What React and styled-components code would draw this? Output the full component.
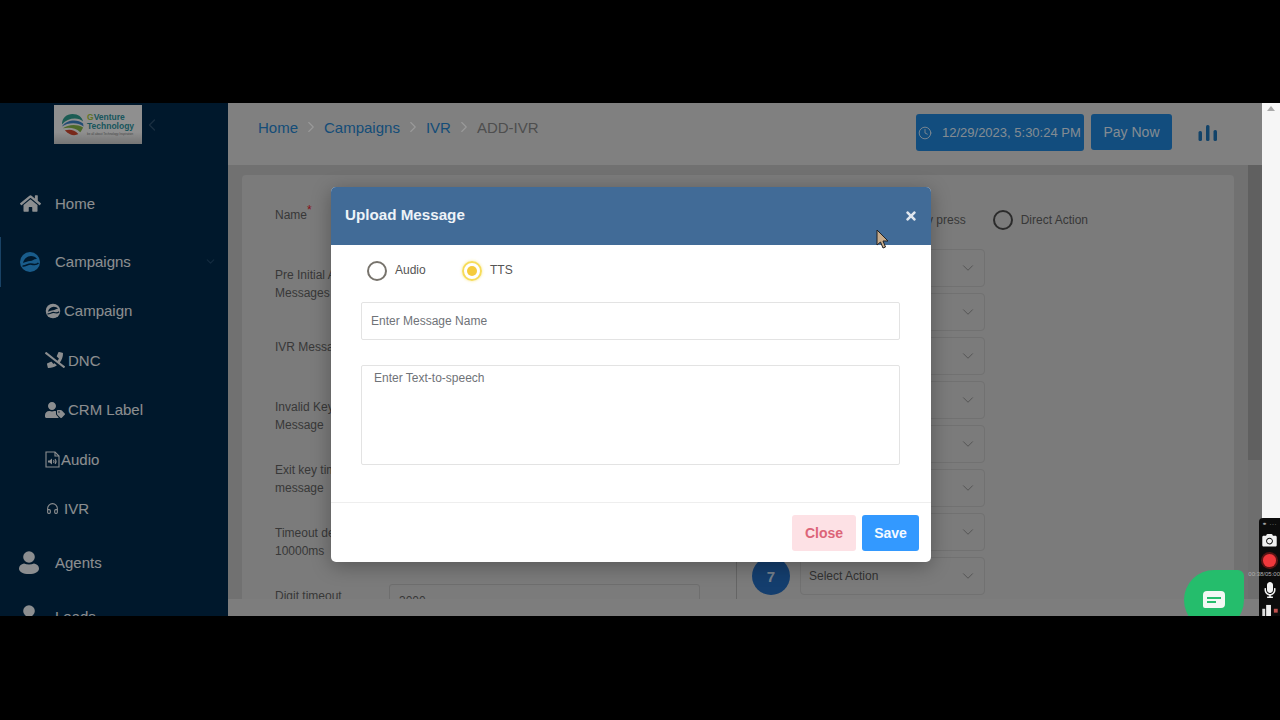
import React from "react";
import styled, { createGlobalStyle } from "styled-components";
import { ChevronDown, ChevronLeft, ChevronRight, Clock, Headphones } from "lucide-react";
import { FaCamera, FaHome, FaMicrophone, FaPhoneSlash, FaTimes, FaUserTag } from "react-icons/fa";

const GlobalStyle = createGlobalStyle`
  html, body { margin: 0; background: #000; overflow: hidden; }
  * { box-sizing: border-box; }
  body { font-family: "Liberation Sans", Arial, sans-serif; }
`;

const Screen = styled.div`
  width: 1280px;
  height: 720px;
  padding: 103px 0 104px;
  background: #000;
`;

const Viewport = styled.div`
  position: relative;
  display: flex;
  height: 513px;
  overflow: hidden;
  background: #f6f6f6;
`;

const AppArea = styled.div`
  position: relative;
  display: flex;
  width: 1262px;
  height: 100%;
`;

const PageScrollbar = styled.div`
  flex: 1;
  display: flex;
  justify-content: center;
  padding-top: 3px;
  &::before {
    content: "";
    border: 4px solid transparent;
    border-top: 0;
    border-bottom: 5px solid #aaa;
    height: 0;
  }
`;

const Sidebar = styled.aside`
  width: 228px;
  flex-shrink: 0;
  background: #00294a;
  overflow: hidden;
`;

const LogoRow = styled.div`
  display: flex;
  align-items: center;
  height: 76px;
  padding: 2px 0 35px 54px;
  color: #2c4e6c;
`;

const LogoBox = styled.div`
  display: flex;
  align-items: center;
  gap: 2px;
  width: 88px;
  height: 39px;
  padding: 0 4px 0 6px;
  background: linear-gradient(#eee 70%, #c4c4c4);
`;

const LogoText = styled.div`
  display: flex;
  flex-direction: column;
  color: #2b8f9a;
  font-size: 8.5px;
  font-weight: bold;
  line-height: 9px;
  white-space: nowrap;
  b { color: #9fc23c; }
  small {
    color: #777;
    font-size: 3px;
    font-weight: normal;
    line-height: 6px;
  }
`;

const Nav = styled.nav`
  display: flex;
  flex-direction: column;
  gap: 8px;
`;

const NavItem = styled.div`
  position: relative;
  display: flex;
  align-items: center;
  flex-shrink: 0;
  height: 50px;
  margin-top: ${(p) => (p.$tight ? "-4px" : "0")};
  padding: 0 0 1px 17px;
  color: #eaedf0;
  font-size: 15px;
  svg { flex-shrink: 0; }
  &::before {
    content: "";
    display: ${(p) => (p.$active ? "block" : "none")};
    position: absolute;
    left: 0;
    top: 0;
    width: 1px;
    height: 100%;
    background: #2a6ea8;
  }
`;

const NavIcon = styled.span`
  display: flex;
  justify-content: center;
  width: 26px;
  margin-right: 12px;
  padding-right: ${(p) => p.$shift || 0}px;
`;

const NavArrow = styled.span`
  display: flex;
  position: absolute;
  left: 204px;
  color: #22486a;
`;

const SubGroup = styled.div`
  display: flex;
  flex-direction: column;
  margin: -9px 0 -4px;
`;

const SubItem = styled.div`
  display: flex;
  align-items: center;
  gap: ${(p) => p.$gap}px;
  height: 49.5px;
  padding-left: ${(p) => p.$left || 45}px;
  color: #eaedf0;
  font-size: 15px;
`;

const Main = styled.main`
  flex: 1;
  display: flex;
  flex-direction: column;
  min-width: 0;
`;

const TopBar = styled.header`
  display: flex;
  align-items: flex-start;
  height: 62px;
  padding: 11px 0 0 30px;
  background: #d6d6d6;
`;

const Crumbs = styled.div`
  flex: 1;
  display: flex;
  align-items: center;
  gap: 4px;
  height: 26px;
  font-size: 15px;
  color: #2480c8;
  svg { color: #fff; flex-shrink: 0; }
  span:last-child { color: #828282; }
`;

const DateButton = styled.div`
  display: flex;
  align-items: center;
  gap: 10px;
  width: 168px;
  height: 37px;
  padding-left: 2px;
  border-radius: 3px;
  background: #1f80d2;
  color: #dce8f4;
  font-size: 13px;
  white-space: nowrap;
  svg { flex-shrink: 0; }
`;

const PayButton = styled.div`
  display: flex;
  align-items: center;
  justify-content: center;
  width: 81px;
  height: 36px;
  margin-left: 7px;
  border-radius: 3px;
  background: #1f80d2;
  color: #dce8f4;
  font-size: 14px;
`;

const BarsWrap = styled.div`
  display: flex;
  width: 90px;
  padding: 10px 0 0 26px;
`;

const Middle = styled.div`
  flex: 1;
  display: flex;
  min-height: 0;
`;

const ScrollArea = styled.div`
  flex: 1;
  min-width: 0;
  padding: 10px 14px 0;
  background: #bcbcbc;
  overflow: hidden;
`;

const Card = styled.section`
  display: flex;
  height: 640px;
  padding-left: 33px;
  border-radius: 4px;
  background: #cdcdcd;
  color: #5e5e5e;
  font-size: 12px;
`;

const LeftColumn = styled.div`
  width: 462px;
  flex-shrink: 0;
  margin-top: 14px;
  padding-top: 17px;
  border-right: 1px solid #a8a8a8;
`;

const FormRow = styled.div`
  display: flex;
  height: ${(p) => p.$h}px;
`;

const RowLabel = styled.label`
  width: 114px;
  flex-shrink: 0;
  line-height: 18px;
  sup { color: #e01c2c; font-size: 12px; line-height: 0; }
`;

const RowInput = styled.div`
  width: 311px;
  height: 38px;
  margin-top: -3px;
  padding: 8px 9px;
  border: 1px solid #b8b8b8;
  border-radius: 3px;
  line-height: 16px;
`;

const RightColumn = styled.div`
  flex: 1;
  padding: 33px 0 0 15px;
`;

const ModeRow = styled.div`
  display: flex;
  justify-content: flex-end;
  align-items: center;
  width: 336px;
  height: 24px;
  margin-bottom: 17px;
`;

const ModeText = styled.span`
  margin-right: ${(p) => p.$gap || 0}px;
`;

const KeyRow = styled.div`
  display: flex;
  align-items: center;
  gap: 10px;
  height: 38px;
  margin-bottom: 6px;
`;

const KeyBadge = styled.div`
  display: flex;
  align-items: center;
  justify-content: center;
  flex-shrink: 0;
  width: 38px;
  height: 38px;
  border-radius: 50%;
  background: #2268b8;
  color: #c4d6e8;
  font-size: 15px;
  font-weight: bold;
`;

const SelectBox = styled.div`
  display: flex;
  align-items: center;
  justify-content: space-between;
  width: 185px;
  height: 38px;
  padding: 0 7px 0 8px;
  border: 1px solid #bcbcbc;
  border-radius: 4px;
  color: #555;
  svg { color: #8c8c8c; }
`;

const ThumbColumn = styled.div`
  width: 14px;
  flex-shrink: 0;
  background: #b8b8b8;
`;

const Thumb = styled.div`
  height: 295px;
  background: #a0a0a0;
`;

const BottomBar = styled.div`
  height: 17px;
  flex-shrink: 0;
  background: #d0d0d0;
`;

const Overlay = styled.div`
  position: absolute;
  inset: 0;
  background: rgba(0, 0, 0, 0.4);
`;

const Modal = styled.div`
  position: absolute;
  top: 84px;
  left: 331px;
  display: flex;
  flex-direction: column;
  width: 600px;
  height: 375px;
  border-radius: 5px;
  background: #fff;
  box-shadow: 0 4px 20px rgba(0, 0, 0, 0.3);
  overflow: hidden;
`;

const ModalHead = styled.div`
  display: flex;
  align-items: center;
  justify-content: space-between;
  height: 58px;
  flex-shrink: 0;
  padding: 0 13px 3px 14px;
  background: #416b97;
  color: #eef3f8;
  font-size: 15.2px;
  font-weight: bold;
  svg { color: #dfe6ee; margin-top: 3px; }
`;

const ModalBody = styled.div`
  height: 258px;
  flex-shrink: 0;
  padding: 16px 31px 0 30px;
  border-bottom: 1px solid #eee;
`;

const RadioLine = styled.div`
  display: flex;
  align-items: center;
  height: 20px;
  padding-left: 6px;
  margin-bottom: 21px;
  color: #555;
  font-size: 12px;
`;

const RadioCircle = styled.span`
  display: flex;
  align-items: center;
  justify-content: center;
  flex-shrink: 0;
  width: 20px;
  height: 20px;
  margin-right: 8px;
  border: 2px solid ${(p) => (p.$on ? "#f6dc5a" : p.$dark ? "#484848" : "#77736c")};
  border-radius: 50%;
  box-shadow: ${(p) => (p.$on ? "0 0 3px rgba(246, 220, 90, 0.7)" : "none")};
  &::after {
    content: "";
    display: ${(p) => (p.$on ? "block" : "none")};
    width: 10px;
    height: 10px;
    border-radius: 50%;
    background: #f5cb3c;
  }
`;

const RadioName = styled.span`
  width: ${(p) => p.$w}px;
  margin-top: -2px;
`;

const TextField = styled.input`
  display: block;
  width: 539px;
  height: 38px;
  margin-bottom: 25px;
  padding: 0 9px 1px;
  border: 1px solid #e3e3e3;
  border-radius: 2px;
  outline: none;
  font: 12px "Liberation Sans", Arial, sans-serif;
  &::placeholder { color: #6f7378; opacity: 1; }
`;

const TextArea = styled.textarea`
  display: block;
  width: 539px;
  height: 100px;
  padding: 5px 12px;
  border: 1px solid #e3e3e3;
  border-radius: 2px;
  outline: none;
  resize: none;
  font: 12px/15px "Liberation Sans", Arial, sans-serif;
  &::placeholder { color: #6f7378; opacity: 1; }
`;

const ModalFoot = styled.div`
  display: flex;
  justify-content: flex-end;
  gap: 6px;
  padding: 12px 12px 0 0;
`;

const FootButton = styled.div`
  display: flex;
  align-items: center;
  justify-content: center;
  width: ${(p) => p.$w}px;
  height: 36px;
  border-radius: 3px;
  background: ${(p) => (p.$save ? "#3399ff" : "#fde1e5")};
  color: ${(p) => (p.$save ? "#f4f9ff" : "#dc6478")};
  font-size: 14px;
  font-weight: bold;
`;

const Pointer = styled.svg`
  position: absolute;
  left: 875px;
  top: 126px;
`;

const ChatBubble = styled.div`
  position: absolute;
  left: 1184px;
  top: 467px;
  display: flex;
  align-items: center;
  justify-content: center;
  width: 60px;
  height: 60px;
  border-radius: 30px 6px 30px 30px;
  background: #25bd6c;
`;

const Recorder = styled.div`
  position: absolute;
  left: 1259px;
  top: 415px;
  display: flex;
  flex-direction: column;
  align-items: center;
  width: 21px;
  height: 98px;
  padding-top: 3px;
  border-radius: 4px 0 0 0;
  background: #0c0c0c;
  color: #f2f2f2;
`;

const RecTop = styled.div`
  height: 12px;
  color: #bbb;
  font-size: 6px;
  line-height: 7px;
  letter-spacing: 0.5px;
  white-space: nowrap;
`;

const RecDot = styled.div`
  width: 13px;
  height: 13px;
  margin: 7px 0 0;
  border-radius: 50%;
  background: #f0383c;
  box-shadow: 0 0 0 2px #5a1414;
`;

const RecTime = styled.div`
  position: absolute;
  top: 53px;
  right: 0;
  color: #b0b0b0;
  font-size: 6px;
  white-space: nowrap;
`;

const RecMic = styled.div`
  display: flex;
  margin-top: 15px;
`;

const RecBars = styled.svg`
  margin-top: 5px;
`;

function CampaignIcon({ size, color, wave }) {
  return (
    <svg width={size} height={size} viewBox="0 0 22 22">
      <circle cx="11" cy="11" r="10" fill={color} />
      <path d="M4 12c1-4 4-7 8-7 2.500 0 5 1 6 3-3-.5-4 2-7 2-2.500 0-4 1-7 2z" fill={wave} />
      <path d="M3.500 15c3 .5 5-2 8-2s5 2 8-1" fill="none" stroke={wave} strokeWidth="1.600" />
    </svg>
  );
}

function PersonIcon() {
  return (
    <svg width="20" height="23" viewBox="0 0 20 23" fill="currentColor">
      <circle cx="10" cy="6" r="5.800" />
      <path d="M5 12.500c3 1.300 7 1.300 10 0 3 .7 5 2.500 5 5 0 3.500-4 5.500-10 5.500S0 21 0 17.500c0-2.500 2-4.300 5-5z" />
    </svg>
  );
}

function AudioFileIcon() {
  return (
    <svg width="15" height="17" viewBox="0 0 15 17" fill="none" stroke="currentColor" strokeWidth="1.100">
      <path d="M1 1h9l4 4v11H1z" />
      <path d="M10 1v4h4" />
      <path d="M3 9.500h1.500L7 7.500v6l-2.500-2H3z" fill="currentColor" stroke="none" />
      <path d="M8.500 9c.6.8.6 2 0 2.800M10 8c1.200 1.400 1.200 3.500 0 4.800" />
    </svg>
  );
}

function LogoMark() {
  return (
    <svg width="25" height="25" viewBox="0 0 26 26" style={{ flexShrink: 0 }}>
      <path d="M2 13C2 6 7 2 13 2s10 3 11 8C19 5 8 6 2 13z" fill="#2f9a8c" />
      <path d="M2 15C7 8 18 7 24 12l.5 3C18 10 8 11 2 15z" fill="#3a7fc0" />
      <path d="M3 17c5-4 14-5 21-1-1 2-2 4-3 5-5-5-12-5-18-4z" fill="#7fb045" />
      <path d="M5 19c5-1 10-1 14 4-3 2-9 2-14-4z" fill="#c8452e" />
    </svg>
  );
}

const leftRows = [
  { h: 60, label: "Name", required: true },
  { h: 72, label: <>Pre Initial Audio<br />Messages</> },
  { h: 60, label: "IVR Message" },
  { h: 63, label: <>Invalid Key<br />Message</> },
  { h: 63, label: <>Exit key timeout<br />message</> },
  { h: 63, label: <>Timeout default<br />10000ms</> },
  { h: 63, label: <>Digit timeout<br />3000ms</>, input: "3000" },
];

const keys = [0, 1, 2, 3, 4, 5, 6, 7];

export default function App() {
  return (
    <Screen>
      <GlobalStyle />
      <Viewport>
        <AppArea>
          <Sidebar>
            <LogoRow>
              <LogoBox>
                <LogoMark />
                <LogoText>
                  <span><b>G</b>Venture</span>
                  <span>Technology</span>
                  <small>be all about Technology Inspiration</small>
                </LogoText>
              </LogoBox>
              <ChevronLeft size={20} strokeWidth={1.5} />
            </LogoRow>
            <Nav>
              <NavItem>
                <NavIcon><FaHome size={21} /></NavIcon>
                Home
              </NavItem>
              <NavItem $active>
                <NavIcon><CampaignIcon size={22} color="#2b9ae8" wave="#00294a" /></NavIcon>
                Campaigns
                <NavArrow><ChevronDown size={13} /></NavArrow>
              </NavItem>
              <SubGroup>
                <SubItem $gap={3}><CampaignIcon size={16} color="#eaedf0" wave="#00294a" />Campaign</SubItem>
                <SubItem $gap={3}><FaPhoneSlash size={20} />DNC</SubItem>
                <SubItem $gap={3}><FaUserTag size={20} />CRM Label</SubItem>
                <SubItem $gap={1}><AudioFileIcon />Audio</SubItem>
                <SubItem $gap={5} $left={46}><Headphones size={13} />IVR</SubItem>
              </SubGroup>
              <NavItem>
                <NavIcon $shift={3}><PersonIcon /></NavIcon>
                Agents
              </NavItem>
              <NavItem $tight>
                <NavIcon $shift={3}><PersonIcon /></NavIcon>
                Leads
              </NavItem>
            </Nav>
          </Sidebar>
          <Main>
            <TopBar>
              <Crumbs>
                <span>Home</span>
                <ChevronRight size={18} strokeWidth={1.5} />
                <span>Campaigns</span>
                <ChevronRight size={18} strokeWidth={1.5} />
                <span>IVR</span>
                <ChevronRight size={18} strokeWidth={1.5} />
                <span>ADD-IVR</span>
              </Crumbs>
              <DateButton><Clock size={14} strokeWidth={1.5} />12/29/2023, 5:30:24 PM</DateButton>
              <PayButton>Pay Now</PayButton>
              <BarsWrap>
                <svg width="20" height="17" viewBox="0 0 20 17">
                  <rect x="0.500" y="7" width="3.500" height="10" rx="1.500" fill="#1f70b0" />
                  <rect x="8" y="1" width="3.500" height="16" rx="1.500" fill="#1f70b0" />
                  <rect x="15.500" y="6" width="3.500" height="11" rx="1.500" fill="#1f70b0" />
                </svg>
              </BarsWrap>
            </TopBar>
            <Middle>
              <ScrollArea>
                <Card>
                  <LeftColumn>
                    {leftRows.map((row, i) => (
                      <FormRow $h={row.h} key={i}>
                        <RowLabel>{row.label}{row.required && <sup>*</sup>}</RowLabel>
                        {row.input && <RowInput>{row.input}</RowInput>}
                      </FormRow>
                    ))}
                  </LeftColumn>
                  <RightColumn>
                    <ModeRow>
                      <ModeText $gap={27}>On key press</ModeText>
                      <RadioCircle $dark />
                      <ModeText>Direct Action</ModeText>
                    </ModeRow>
                    {keys.map((k) => (
                      <KeyRow key={k}>
                        <KeyBadge>{k}</KeyBadge>
                        <SelectBox>
                          Select Action
                          <ChevronDown size={18} strokeWidth={1.3} />
                        </SelectBox>
                      </KeyRow>
                    ))}
                  </RightColumn>
                </Card>
              </ScrollArea>
              <ThumbColumn><Thumb /></ThumbColumn>
            </Middle>
            <BottomBar />
          </Main>
          <Overlay />
          <Modal>
            <ModalHead>
              Upload Message
              <FaTimes size={14} />
            </ModalHead>
            <ModalBody>
              <RadioLine>
                <RadioCircle />
                <RadioName $w={67}>Audio</RadioName>
                <RadioCircle $on />
                <RadioName>TTS</RadioName>
              </RadioLine>
              <TextField placeholder="Enter Message Name" />
              <TextArea placeholder="Enter Text-to-speech" />
            </ModalBody>
            <ModalFoot>
              <FootButton $w={64}>Close</FootButton>
              <FootButton $w={57} $save>Save</FootButton>
            </ModalFoot>
          </Modal>
          <Pointer width="14" height="20" viewBox="0 0 14 20">
            <path d="M2 1v15l3.500-3 2.500 6 2.500-1-2.500-6H13z" fill="#c8ac8c" stroke="#222" strokeWidth="1" />
          </Pointer>
        </AppArea>
        <PageScrollbar />
        <ChatBubble>
          <svg width="24" height="20" viewBox="0 0 24 20">
            <path d="M5 1h14a4 4 0 0 1 4 4v9a4 4 0 0 1-4 4H3a2 2 0 0 1-2-2V5a4 4 0 0 1 4-4z" fill="#f2f8f4" />
            <rect x="5" y="7" width="14" height="2" fill="#25bd6c" />
            <rect x="5" y="11" width="9" height="2" fill="#25bd6c" />
          </svg>
        </ChatBubble>
        <Recorder>
          <RecTop>⚭ ···</RecTop>
          <FaCamera size={15} />
          <RecDot />
          <RecTime>00:38/05:00</RecTime>
          <RecMic><FaMicrophone size={16} /></RecMic>
          <RecBars width="18" height="14" viewBox="0 0 18 14">
            <rect x="1" y="6" width="3" height="8" fill="#ddd" />
            <rect x="5" y="2" width="5" height="12" fill="#eee" />
            <rect x="13" y="6" width="4" height="4" fill="#c0504d" />
          </RecBars>
        </Recorder>
      </Viewport>
    </Screen>
  );
}
